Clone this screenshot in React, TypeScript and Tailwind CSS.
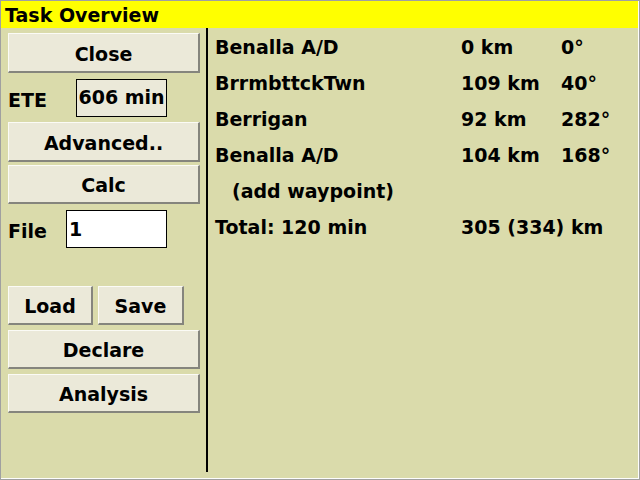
const rows = [
  { name: 'Benalla A/D', dist: '0 km', bearing: '0°' },
  { name: 'BrrmbttckTwn', dist: '109 km', bearing: '40°' },
  { name: 'Berrigan', dist: '92 km', bearing: '282°' },
  { name: 'Benalla A/D', dist: '104 km', bearing: '168°' },
];

function Btn({ label, className = '' }: { label: string; className?: string }) {
  return (
    <div
      className={`flex items-center justify-center pt-[3px] bg-[#ebe9d9] border-t border-l border-t-[#fbfbf6] border-l-[#fbfbf6] border-b-2 border-r-2 border-b-[#85857d] border-r-[#85857d] ${className}`}
    >
      {label}
    </div>
  );
}

export default function App() {
  return (
    <div className="w-[640px] h-[480px] border-l border-t border-r border-b border-[#a0a0a0] overflow-hidden">
      <div
        className="w-full h-full flex flex-col bg-[#dadbab] text-black font-bold text-[19px] leading-none border-r border-b border-r-[#fdfdfd] border-b-[#fdfdfd] overflow-hidden"
        style={{ fontFamily: '"DejaVu Sans", Verdana, sans-serif' }}
      >
        <div className="h-[27px] bg-[#ffff00] pl-1 pt-[1px] flex items-center shrink-0">Task Overview</div>

        <div className="flex h-[444px]">
          <div className="w-[205px] shrink-0 pl-[7px] flex flex-col">
            <Btn label="Close" className="mt-[5px] w-[192px] h-[40px]" />

            <div className="flex items-center mt-[6px] h-[38px]">
              <span className="w-[68px] pt-[4px]">ETE</span>
              <div className="w-[91px] h-[38px] border border-black bg-[#ebe9d9] flex items-center justify-center pb-[2px]">
                606 min
              </div>
            </div>

            <Btn label="Advanced.." className="mt-[5px] w-[192px] h-[40px]" />
            <Btn label="Calc" className="mt-[3px] w-[192px] h-[39px]" />

            <div className="flex items-center mt-[6px] h-[38px]">
              <span className="w-[58px] pt-[5px]">File</span>
              <div className="w-[101px] h-[38px] border border-black bg-white pl-[2px] pt-[9px]">1</div>
            </div>

            <div className="flex gap-[5px] mt-[38px]">
              <Btn label="Load" className="w-[85px] h-[39px]" />
              <Btn label="Save" className="w-[86px] h-[39px]" />
            </div>
            <Btn label="Declare" className="mt-[5px] w-[192px] h-[39px]" />
            <Btn label="Analysis" className="mt-[5px] w-[192px] h-[39px]" />
          </div>

          <div className="w-[2px] bg-black shrink-0" />

          <div className="flex-1 pl-[7px] pt-[1px] leading-[36px]">
            {rows.map((r, i) => (
              <div key={i} className="flex h-[36px]">
                <span className="w-[246px]">{r.name}</span>
                <span className="w-[100px]">{r.dist}</span>
                <span>{r.bearing}</span>
              </div>
            ))}
            <div className="h-[36px] pl-[17px]">(add waypoint)</div>
            <div className="flex h-[36px]">
              <span className="w-[246px]">Total: 120 min</span>
              <span>305 (334) km</span>
            </div>
          </div>
        </div>
      </div>
    </div>
  );
}
